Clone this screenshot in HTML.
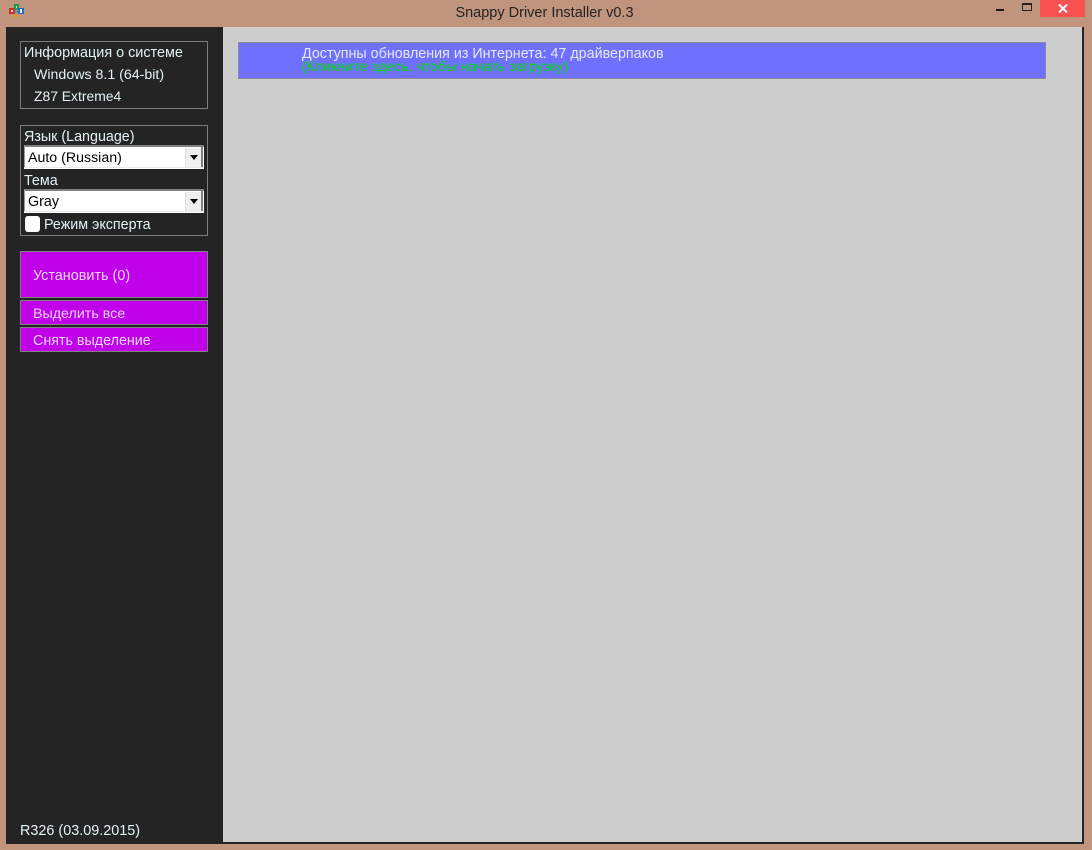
<!DOCTYPE html>
<html><head><meta charset="utf-8"><style>
html,body{margin:0;padding:0;width:1092px;height:850px;overflow:hidden;background:#c1947e}
*{box-sizing:border-box}
div,svg{position:absolute}
.t{font:14.3px/17px "Liberation Sans",sans-serif;white-space:nowrap;color:#e4f2f6}
.box{border:1px solid #7d7d7d}
.sel{left:24px;width:180px;height:24px;background:#fff}
.sel .top{left:0;top:0;width:180px;height:2px;background:#808080}
.sel .lft{left:0;top:0;width:1px;height:22px;background:#9a9a9a}
.sel .rgt{left:177px;top:0;width:2px;height:22px;background:#808080}
.sel .btm{left:0;top:22px;width:180px;height:1px;background:#e8e8e8}
.arr{left:161px;top:3px;width:16px;height:19px;background:#efefef;border-left:1px solid #ddd}
.arr:after{content:"";position:absolute;left:4px;top:7px;border:4px solid transparent;border-top:5px solid #000;border-bottom:0}
.btn{left:20px;width:188px;background:#c000e8;border:1px solid #7f7f7f}
.b{color:#ecd4fb}
</style></head><body>
<svg style="left:9px;top:3px" width="15" height="15" viewBox="0 0 15 15"><rect x="0" y="5" width="6" height="6" fill="#c8321e"/><rect x="5" y="1" width="5" height="5" fill="#1f9a3c"/><rect x="9" y="5" width="6" height="6" fill="#1c6fc0"/><rect x="6" y="6" width="3" height="4" fill="#5a9aa0"/><rect x="5" y="11" width="4" height="3" fill="#e8953a"/><rect x="2" y="7" width="2" height="2" fill="#f4d8d0"/><rect x="11" y="6" width="2" height="4" fill="#fff"/><rect x="7" y="3" width="1" height="2" fill="#cfe8d4"/></svg>
<div class="t" style="left:0;width:1089px;top:5px;text-align:center;color:#222;font-size:14.5px">Snappy Driver Installer v0.3</div>
<div style="left:996px;top:9px;width:8px;height:2px;background:#1a1a1a"></div>
<div style="left:1022px;top:3px;width:10px;height:8px;border:1px solid #222;border-top-width:2px"></div>
<div style="left:1040px;top:0;width:45px;height:17px;background:#f95050"></div>
<svg style="left:1058px;top:4px" width="10" height="9" viewBox="0 0 10 9"><path d="M1 .5L9 8.500M9 .5L1 8.500" stroke="#fff" stroke-width="2"/></svg>

<div style="left:6px;top:27px;width:1078px;height:817px;background:#242424"></div>
<div style="left:223px;top:27px;width:859px;height:815px;background:#cdcdcd"></div>

<div class="box" style="left:20px;top:41px;width:188px;height:68px"></div>
<div class="t" style="left:24px;top:45px;font-size:14.4px">Информация о системе</div>
<div class="t" style="left:34px;top:67px;font-size:14.2px">Windows 8.1 (64-bit)</div>
<div class="t" style="left:34px;top:88px;font-size:13.9px">Z87 Extreme4</div>

<div class="box" style="left:20px;top:125px;width:188px;height:111px"></div>
<div class="t" style="left:24px;top:129px;font-size:14.3px">Язык (Language)</div>
<div class="sel" style="top:145px"><div class="top"></div><div class="lft"></div><div class="rgt"></div><div class="btm"></div><div class="arr"></div></div>
<div class="t" style="left:28px;top:150px;color:#000;font-size:14.2px">Auto (Russian)</div>
<div class="t" style="left:24px;top:173px">Тема</div>
<div class="sel" style="top:189px"><div class="top"></div><div class="lft"></div><div class="rgt"></div><div class="btm"></div><div class="arr"></div></div>
<div class="t" style="left:28px;top:194px;color:#000">Gray</div>
<div style="left:25px;top:216px;width:15px;height:16px;background:#fff;border-radius:3px"></div>
<div class="t" style="left:44px;top:217px;font-size:14.3px">Режим эксперта</div>

<div class="btn" style="top:251px;height:47px"></div>
<div class="t b" style="left:33px;top:268px;font-size:14.4px">Установить (0)</div>
<div class="btn" style="top:300px;height:25px"></div>
<div class="t b" style="left:33px;top:306px;font-size:14.25px">Выделить все</div>
<div class="btn" style="top:327px;height:25px"></div>
<div class="t b" style="left:33px;top:333px;font-size:14.3px">Снять выделение</div>

<div class="t" style="left:20px;top:823px;font-size:14.4px">R326 (03.09.2015)</div>

<div style="left:238px;top:42px;width:808px;height:37px;background:#7070ff;border:1px solid #8a8a9a"></div>
<div class="t" style="left:302px;top:46px;color:#e4e8ff;font-size:14.3px">Доступны обновления из Интернета: 47 драйверпаков</div>
<div class="t" style="left:302px;top:59px;color:#00e000;font-size:14.26px">(Кликните здесь, чтобы начать загрузку)</div>
</body></html>
